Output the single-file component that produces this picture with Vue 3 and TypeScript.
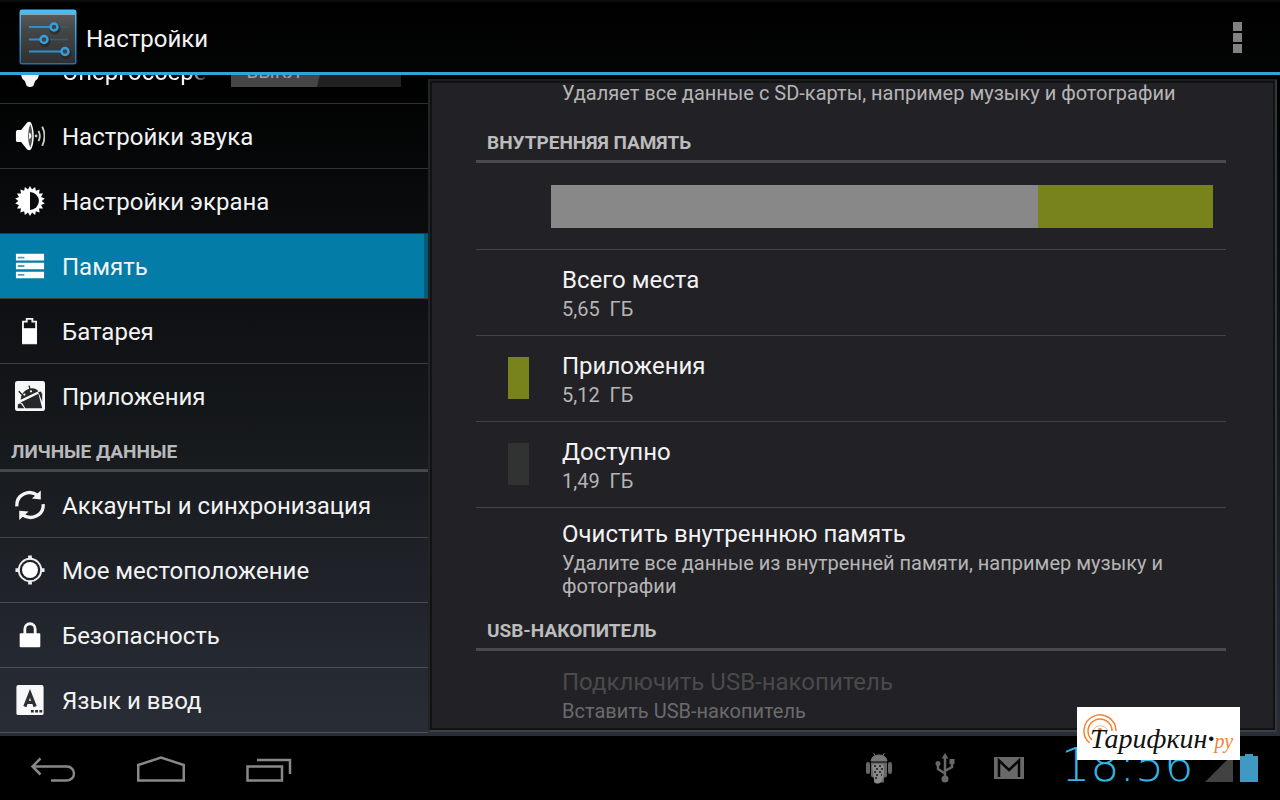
<script setup lang="ts">
import { ref } from 'vue'

type Kind = 'sound' | 'display' | 'storage' | 'battery' | 'apps' | 'sync' | 'location' | 'security' | 'language'

interface NavItem {
  id: Kind
  label: string
}

interface StorageRow {
  label: string
  value: string
  color: string
}

const deviceItems: NavItem[] = [
  { id: 'sound', label: 'Настройки звука' },
  { id: 'display', label: 'Настройки экрана' },
  { id: 'storage', label: 'Память' },
  { id: 'battery', label: 'Батарея' },
  { id: 'apps', label: 'Приложения' },
]

const personalItems: NavItem[] = [
  { id: 'sync', label: 'Аккаунты и синхронизация' },
  { id: 'location', label: 'Мое местоположение' },
  { id: 'security', label: 'Безопасность' },
  { id: 'language', label: 'Язык и ввод' },
]

const groups = [
  { title: '', items: deviceItems },
  { title: 'ЛИЧНЫЕ ДАННЫЕ', items: personalItems },
]

const storageRows: StorageRow[] = [
  { label: 'Всего места', value: '5,65\u00a0 ГБ', color: 'transparent' },
  { label: 'Приложения', value: '5,12\u00a0 ГБ', color: '#79831c' },
  { label: 'Доступно', value: '1,49\u00a0 ГБ', color: '#313332' },
]

// outline of the toothed brightness wheel
const wheelPoints = Array.from({ length: 36 }, (_, i) => {
  const radius = i % 2 === 0 ? 16 : 12.5
  const angle = (i * Math.PI) / 18 - Math.PI / 2
  return `${(16 + radius * Math.cos(angle)).toFixed(2)},${(16 + radius * Math.sin(angle)).toFixed(2)}`
}).join(' ')

const freeShare = 73.6
const selected = ref<Kind>('storage')
const powerSaving = ref(false)
</script>

<template>
  <div class="screen">
    <header class="action-bar">
      <svg class="app-icon" viewBox="0 0 58 56" aria-hidden="true">
        <defs>
          <linearGradient id="tile" x1="0" y1="0" x2="0" y2="1">
            <stop offset="0" stop-color="#5a5a5a" />
            <stop offset="0.3" stop-color="#474747" />
            <stop offset="1" stop-color="#303030" />
          </linearGradient>
          <linearGradient id="rim" x1="0" y1="0" x2="0" y2="1">
            <stop offset="0" stop-color="#4cc0f4" />
            <stop offset="1" stop-color="#1f6fae" />
          </linearGradient>
        </defs>
        <rect x="0.5" y="0.5" width="57" height="55" rx="2.5" fill="url(#rim)" />
        <rect x="2" y="5" width="54" height="49" fill="url(#tile)" />
        <path d="M2 5.5h54" stroke="#8ea3ad" stroke-width="1" />
        <g fill="none" stroke="#2b90cf" stroke-width="2">
          <path d="M10 18h22M10 30.500h11M10 42.500h33" />
          <path d="M38 18h11M29 30.500h20" stroke="#245f84" stroke-width="1.500" />
        </g>
        <g fill="none" stroke="#1c1c1c" stroke-opacity="0.5" stroke-width="3">
          <circle cx="36" cy="20" r="4" /><circle cx="26" cy="32.500" r="4" /><circle cx="47" cy="44.500" r="4" />
        </g>
        <g fill="#3e4447" stroke="#359fdd" stroke-width="2.500">
          <circle cx="35" cy="18" r="3.500" /><circle cx="25" cy="30.500" r="3.500" /><circle cx="46" cy="42.500" r="3.500" />
        </g>
      </svg>
      <h1>Настройки</h1>
      <button class="overflow" type="button" aria-label="Меню"><i></i><i></i><i></i></button>
    </header>

    <main class="content">
      <nav class="sidebar">
        <div class="list">
          <div class="item power">
            <svg class="icon" viewBox="0 0 32 32" aria-hidden="true">
              <path d="M16 0a11 11 0 0 1 11 11c0 5-1 6-2 10q-0.500 3-3.500 4.500L19.500 31q-3.500 2-7 0l-2-5.500q-3-1.500-3.500-4.500C6 17 5 16 5 11A11 11 0 0 1 16 0z" fill="#f4f4f4" />
            </svg>
            <label class="power-label" for="power">Энергосбере</label>
            <span class="switch">
              <input id="power" v-model="powerSaving" type="checkbox" role="switch" />
              <span class="thumb">ВЫКЛ</span>
            </span>
          </div>
          <section v-for="group in groups" :key="group.title">
            <h2 v-if="group.title" class="group-title">{{ group.title }}</h2>
            <button
              v-for="item in group.items"
              :key="item.id"
              type="button"
              class="item"
              :class="{ active: item.id === selected }"
              @click="selected = item.id"
            >
              <svg class="icon" viewBox="0 0 32 32" aria-hidden="true">
                <template v-if="item.id === 'sound'">
                  <path d="M1 11.500Q1 9.500 3 9.500h3.500L13 1.500Q15 0 17 1.500Q20 7 20 16t-3 14.500Q15 32 13 30.500L6.500 22.500H3Q1 22.500 1 20.500z" fill="#fff" />
                  <path d="M16.500 3.500Q14 8 14 16t2.500 12.500Q18.500 23 18.500 16T16.500 3.500z" fill="#555" />
                  <path d="M15 12.500q2.500 0.500 2.500 3.500t-2.500 3.500z" fill="#fff" />
                  <circle cx="22.500" cy="16" r="1.500" fill="#ccc" />
                  <path d="M25 10.500q3 5.500 0 11M29 6q5 10 0 20.500" fill="none" stroke="#c8c8c8" stroke-width="2" />
                </template>
                <template v-else-if="item.id === 'display'">
                  <polygon :points="wheelPoints" fill="#fff" />
                  <path d="M16 6.500a9.500 9.500 0 0 1 0 19z" fill="#0b0c0d" />
                </template>
                <template v-else-if="item.id === 'storage'">
                  <path d="M1 3h30v7H1zM1 12.500h30v7H1zM1 22h30v7H1z" fill="#fff" />
                  <path d="M3 7h7M3 16h7M3 25.500h7" stroke="#4c9fbd" stroke-width="2" />
                </template>
                <template v-else-if="item.id === 'battery'">
                  <path d="M8.500 6h4V3h6v3h4v23h-14z" fill="none" stroke="#f2f2f2" stroke-width="2" />
                  <path d="M8 13h15v16H8z" fill="#fff" />
                </template>
                <template v-else-if="item.id === 'apps'">
                  <rect width="32" height="32" rx="2.500" fill="#f8f8f8" />
                  <path d="M6 20L25 11Q22 7 16 8Q7 10 6 20z" fill="#24282a" />
                  <path d="M4 11l4 4M15 5l1 4M28 12l-3 1" stroke="#24282a" stroke-width="1.500" />
                  <path d="M6 23L25 13.500l4 15.500H11L8 24z" fill="#24282a" />
                  <path d="M25 12q2.500-2 4 2v8z" fill="#24282a" />
                  <path d="M3 25q3-2 4 0l3 4H3z" fill="#24282a" />
                  <circle cx="10" cy="14.500" r="1.200" fill="#fff" /><circle cx="17" cy="11" r="1.200" fill="#fff" />
                </template>
                <template v-else-if="item.id === 'sync'">
                  <path d="M2 17.500C1 5 15-1.500 24.500 6M30 15c1 12-13 18.500-22.500 11" fill="none" stroke="#f4f4f4" stroke-width="3.500" />
                  <path d="M27.500 0.500v9.500l-9.500-1zM4.500 32v-10l10 1z" fill="#f4f4f4" />
                </template>
                <template v-else-if="item.id === 'location'">
                  <circle cx="16" cy="16" r="8.500" fill="#fff" />
                  <circle cx="16" cy="16" r="12" fill="none" stroke="#eee" stroke-width="2" />
                  <path d="M16 0.500v4M16 27.500v4M0.500 16h4M27.500 16h4" stroke="#eee" stroke-width="4" />
                </template>
                <template v-else-if="item.id === 'security'">
                  <path d="M10.500 15V9.500a5.500 5.500 0 0 1 11 0V15" fill="none" stroke="#f6f6f6" stroke-width="3" />
                  <rect x="5" y="14" width="22" height="15" rx="1" fill="#fff" />
                </template>
                <template v-else>
                  <rect x="1.500" width="29" height="32" rx="2" fill="#f8f8f8" />
                  <path d="M10.500 23L16 9l5.500 14M12.500 18.500h7" fill="none" stroke="#2c3034" stroke-width="3.500" />
                  <path d="M17 28h3M21.500 28h3M26 28h3" stroke="#2c3034" stroke-width="2.500" />
                </template>
              </svg>
              <span>{{ item.label }}</span>
            </button>
          </section>
        </div>
      </nav>

      <div class="pane">
        <article class="details">
          <p class="sub lead">Удаляет все данные с SD-карты, например музыку и фотографии</p>

          <h2 class="category">ВНУТРЕННЯЯ ПАМЯТЬ</h2>
          <div class="usage">
            <div class="bar"><i :style="{ width: freeShare + '%' }"></i></div>
          </div>
          <div v-for="row in storageRows" :key="row.label" class="row">
            <i class="swatch" :style="{ background: row.color }"></i>
            <div>
              <h3>{{ row.label }}</h3>
              <p class="sub">{{ row.value }}</p>
            </div>
          </div>
          <div class="row action">
            <div>
              <h3>Очистить внутреннюю память</h3>
              <p class="sub">Удалите все данные из внутренней памяти, например музыку и фотографии</p>
            </div>
          </div>

          <h2 class="category usb">USB-НАКОПИТЕЛЬ</h2>
          <div class="row action disabled">
            <div>
              <h3>Подключить USB-накопитель</h3>
              <p class="sub">Вставить USB-накопитель</p>
            </div>
          </div>
        </article>
      </div>
    </main>

    <footer class="system-bar">
      <div class="keys">
        <button type="button" aria-label="Назад">
          <svg viewBox="0 0 48 28">
            <path d="M2.500 11.500H37a6.500 6.500 0 0 1 0 14H21M10.500 3.500L2.500 11.500l8 8" />
          </svg>
        </button>
        <button type="button" aria-label="Домой">
          <svg viewBox="0 0 48 28"><path d="M1.250 25.500V10L24 2.500l22.750 7.500v15.500z" /></svg>
        </button>
        <button type="button" aria-label="Недавние приложения">
          <svg viewBox="0 0 48 28"><path d="M3.500 11.500H38v14H3.500zM13 5h33v14" /></svg>
        </button>
      </div>

      <div class="status">
        <svg class="droid" viewBox="0 0 28 32" aria-hidden="true">
          <path d="M6 9Q7 3 14 3t8 6zM8.500 1l2 3M19.500 1l-2 3" fill="#777" stroke="#777" />
          <path d="M6 10.500h16v13q0 2-2 2h-1v5h-4v-5h-2v5H9v-5H8q-2 0-2-2z" fill="#666" />
          <path d="M3 12v8M25 12v8" stroke="#666" stroke-width="4" stroke-linecap="round" />
          <path d="M7 14q0-2 2-2h7q3 0 3 3v6q0 5-3 9l-2 1.500h-3q-2-1-2-4z" fill="#8a8a8a" />
          <path d="M9 14h2M14 14h2M11 17h2M16 17h2M9 20h2M14 20h2M11 23h2M16 23h1M10 26h2" stroke="#333" stroke-width="2" />
        </svg>
        <svg class="usb-icon" viewBox="0 0 20 30" aria-hidden="true">
          <path d="M10 4v22M10 20.500L3 16v-4M10 18l7-4V9" fill="none" stroke="#686868" stroke-width="2.500" />
          <path d="M10 0l3.500 5.500h-7zM14.500 6h5v5h-5z" fill="#686868" />
          <circle cx="3" cy="10.500" r="2.500" fill="#686868" /><circle cx="10" cy="26" r="3.500" fill="#686868" />
        </svg>
        <svg class="mail" viewBox="0 0 30 22" aria-hidden="true">
          <rect width="30" height="22" fill="#686a67" />
          <path d="M5 20V3.500L15 13l10-9.500V20" fill="none" stroke="#070707" stroke-width="2.500" />
        </svg>
        <time class="clock">18:56</time>
        <svg class="signal" viewBox="0 0 28 28" aria-hidden="true"><path d="M28 0v28H0z" fill="#424242" /></svg>
        <svg class="battery" viewBox="0 0 18 28" aria-hidden="true"><path d="M0 2h5V0h8v2h5v26H0z" fill="#4099c2" /></svg>
      </div>
    </footer>

    <aside class="badge">
      <svg viewBox="0 0 34 34" aria-hidden="true">
        <g fill="none" stroke="#f58233">
          <path d="M6.500 29A16 16 0 1 1 33 17" stroke-width="1.500" />
          <path d="M9 26A12 12 0 1 1 29 17" stroke-width="1.500" />
          <path d="M9.500 20A8 8 0 0 1 25 17" stroke-width="1" stroke-opacity="0.600" />
        </g>
        <circle cx="17" cy="16" r="2" fill="#f58233" />
      </svg>
      <span class="brand">Тарифкин<b>·</b><em>ру</em></span>
    </aside>
  </div>
</template>

<style>
body {
  margin: 0;
  background: #000;
}
</style>

<style scoped>
.screen {
  position: relative;
  display: grid;
  grid-template-rows: auto minmax(0, 1fr) auto;
  height: 100vh;
  overflow: hidden;
  background: #000;
  color: #f3f3f3;
  font-family: Roboto, "Noto Sans", sans-serif;
}

h1,
h2,
h3,
p {
  margin: 0;
  font-weight: 400;
}

button {
  border: 0;
  padding: 0;
  background: none;
  color: inherit;
  font: inherit;
}

.action-bar {
  display: flex;
  align-items: center;
  height: 70px;
  padding: 2px 32px 0 19px;
  border-bottom: 3px solid #2fa5d6;
  background: linear-gradient(#111 0, #000 3px, #030504);
}

.app-icon {
  width: 58px;
  height: 56px;
}

.action-bar h1 {
  flex: 1;
  margin: 4px 0 0 9px;
  font-size: 24px;
  line-height: 28px;
}

.overflow {
  display: flex;
  flex-direction: column;
  gap: 2px;
  width: 21px;
  align-items: center;
}

.overflow i {
  width: 9px;
  height: 9px;
  background: #818181;
}

.content {
  display: grid;
  grid-template-columns: minmax(0, 428fr) minmax(0, 852fr);
  min-height: 0;
  background: linear-gradient(#000, #080a0b 18%, #16191c 55%, #292d36);
}

.sidebar {
  min-height: 0;
  overflow: hidden;
}

/* the list is scrolled part of the way through its first row */
.list {
  margin-top: -36px;
}

.item {
  box-sizing: border-box;
  display: flex;
  align-items: center;
  gap: 17px;
  width: 100%;
  height: 65px;
  padding: 2px 14px 0 15px;
  border-bottom: 1px solid rgba(255, 255, 255, 0.18);
  font-size: 24px;
  text-align: left;
  white-space: nowrap;
}

section:first-of-type .item:last-child {
  border-color: transparent;
}

.item.active {
  background: linear-gradient(90deg, #037ca8 calc(100% - 4px), #025a7a calc(100% - 4px));
  background-clip: padding-box;
}

.icon {
  flex: none;
  width: 30px;
  height: 30px;
  margin-bottom: 3px;
}

.power .icon {
  margin-bottom: 0;
}

.power-label {
  flex: 1;
  max-width: 148px;
  overflow: hidden;
  mask-image: linear-gradient(90deg, #000 85%, transparent);
}

.switch {
  position: relative;
  display: flex;
  flex: none;
  width: 170px;
  height: 30px;
  margin-left: 4px;
  background: #212121;
}

.switch input {
  position: absolute;
  inset: 0;
  width: 100%;
  height: 100%;
  margin: 0;
  opacity: 0;
}

.thumb {
  width: 93px;
  padding-right: 8px;
  box-sizing: border-box;
  background: #464646;
  clip-path: polygon(0 0, 100% 0, 86px 100%, 0 100%);
  color: #a0a0a0;
  font-size: 19px;
  line-height: 30px;
  text-align: center;
}

.group-title {
  box-sizing: border-box;
  height: 43px;
  margin-bottom: 1px;
  padding: 11px 11px 0;
  border-bottom: 3px solid #45484b;
  color: #b9b9b9;
  font-size: 19px;
  font-weight: 700;
  line-height: 24px;
}

.pane {
  min-height: 0;
  padding: 4px 3px 4px 0;
}

.details {
  box-sizing: border-box;
  height: 100%;
  overflow: hidden;
  padding: 0 49px 0 46px;
  border: 2px solid;
  border-color: #1c1e1d #34373b #3d4045 #222426;
  background: #222126;
  box-shadow: inset 0 0 0 2px #111214;
}

.sub {
  color: #b5b5b5;
  font-size: 20px;
  line-height: 23px;
}

.lead {
  padding: 1px 0 0 86px;
}

.category {
  box-sizing: border-box;
  height: 58px;
  padding: 26px 11px 0;
  border-bottom: 3px solid #4b4a50;
  color: #bcbcbc;
  font-size: 19px;
  font-weight: 700;
  line-height: 24px;
}

.usage {
  padding: 22px 13px 21px 75px;
  border-bottom: 1px solid #434247;
}

.bar {
  display: flex;
  height: 43px;
  background: #79831c;
}

.bar i {
  background: #888;
}

.row {
  box-sizing: border-box;
  display: flex;
  align-items: center;
  height: 86px;
  padding: 0 32px 2px;
  border-bottom: 1px solid #434247;
}

.swatch {
  width: 21px;
  height: 42px;
  margin-right: 33px;
}

h3 {
  padding-bottom: 1px;
  font-size: 24px;
  line-height: 34px;
}

.row.action {
  height: auto;
  padding: 9px 32px 7px 86px;
  border: 0;
}

.category.usb {
  height: 46px;
  padding-top: 14px;
}

.row.disabled {
  padding-top: 14px;
}

.disabled h3 {
  color: #4a4a4b;
}

.disabled .sub {
  color: #6b6b6d;
}

.system-bar {
  display: flex;
  align-items: center;
  justify-content: space-between;
  height: 64px;
  padding: 0 22px 0 30px;
  background: #000;
}

.keys {
  display: flex;
  gap: 59px;
  padding-top: 2px;
}

.keys button,
.keys svg {
  display: block;
  width: 48px;
  height: 28px;
}

.keys svg {
  fill: none;
  stroke: #888;
  stroke-width: 2.5;
}

.status {
  display: flex;
  align-items: center;
}

.droid {
  width: 28px;
  height: 32px;
  margin-right: 42px;
}

.usb-icon {
  width: 20px;
  height: 30px;
  margin-right: 39px;
}

.mail {
  width: 30px;
  height: 22px;
  margin-right: 37px;
}

.clock {
  width: 144px;
  padding-bottom: 6px;
  color: #33b5e5;
  font-family: "DejaVu Sans Light", "DejaVu Sans", sans-serif;
  font-size: 46px;
  font-weight: 200;
  line-height: 56px;
}

.signal {
  width: 28px;
  height: 28px;
  margin-right: 7px;
}

.battery {
  width: 18px;
  height: 28px;
}

.badge {
  position: absolute;
  right: 40px;
  bottom: 40px;
  box-sizing: border-box;
  display: grid;
  width: 163px;
  height: 53px;
  padding: 7px 6px;
  background: #fff;
  color: #111;
}

.badge svg {
  grid-area: 1 / 1;
  width: 34px;
  height: 34px;
}

.brand {
  grid-area: 1 / 1;
  padding: 9px 0 0 7px;
  font-family: "Liberation Serif", serif;
  font-size: 28px;
  font-style: italic;
  line-height: 32px;
  white-space: nowrap;
}

.brand em {
  color: #f58233;
  font-size: 20px;
}
</style>
